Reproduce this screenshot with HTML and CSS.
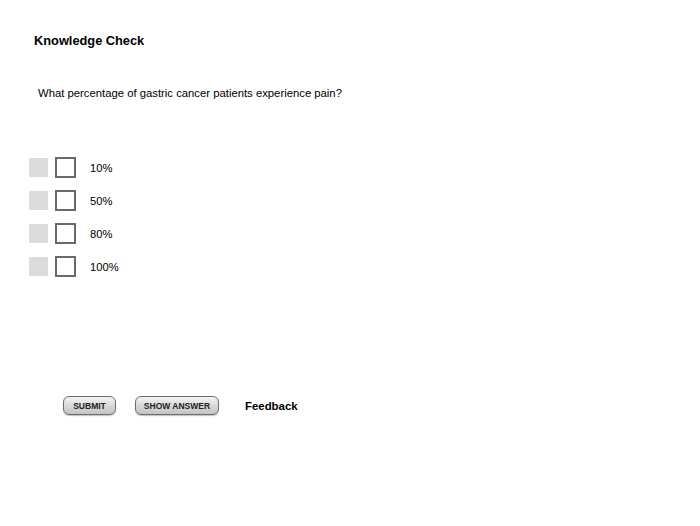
FILE: index.html
```html
<!DOCTYPE html>
<html>
<head>
<meta charset="utf-8">
<link rel="stylesheet" href="styles.css">
</head>
<body>
<div class="page">
  <h1 class="title">Knowledge Check</h1>
  <p class="question">What percentage of gastric cancer patients experience pain?</p>
  <ul class="options">
    <li class="option"><span class="marker"></span><span class="box"></span><span class="label">10%</span></li>
    <li class="option"><span class="marker"></span><span class="box"></span><span class="label">50%</span></li>
    <li class="option"><span class="marker"></span><span class="box"></span><span class="label">80%</span></li>
    <li class="option"><span class="marker"></span><span class="box"></span><span class="label">100%</span></li>
  </ul>
  <div class="actions">
    <button class="btn btn-submit">SUBMIT</button>
    <button class="btn btn-show">SHOW ANSWER</button>
    <span class="feedback">Feedback</span>
  </div>
</div>
</body>
</html>
```
FILE: styles.css
```css
html, body {
  margin: 0;
  padding: 0;
  background: #ffffff;
}
body {
  font-family: "Liberation Sans", Arial, sans-serif;
  color: #000;
  width: 700px;
  height: 526px;
  overflow: hidden;
}
.page {
  padding: 33px 0 0 34px;
}
.title {
  margin: 0;
  font-size: 12.8px;
  font-weight: bold;
  line-height: 16px;
}
.question {
  margin: 37px 0 0 4px;
  font-size: 11.3px;
  line-height: 14px;
}
.options {
  list-style: none;
  margin: 57px 0 0 -5px;
  padding: 0;
  display: flex;
  flex-direction: column;
  gap: 12px;
}
.option {
  display: flex;
  align-items: center;
  height: 21px;
}
.marker {
  width: 19px;
  height: 19px;
  background: #dcdcdc;
}
.box {
  margin-left: 7px;
  width: 17px;
  height: 17px;
  border: 2px solid #6a6a6a;
  background: #fff;
}
.label {
  margin-left: 14px;
  font-size: 11.2px;
}
.actions {
  display: flex;
  align-items: center;
  margin: 119px 0 0 29px;
}
.btn {
  font-family: "Liberation Sans", Arial, sans-serif;
  font-weight: bold;
  font-size: 8.5px;
  color: #222;
  height: 19px;
  padding: 0;
  border: 1px solid #6e6e6e;
  border-radius: 6px;
  background: linear-gradient(#f4f4f4, #d6d6d6 55%, #c4c4c4);
  box-shadow: 0 1px 1px rgba(0,0,0,0.25);
}
.btn-submit {
  width: 53px;
}
.btn-show {
  width: 84px;
  margin-left: 19px;
}
.feedback {
  margin-left: 26px;
  font-size: 11.4px;
  font-weight: bold;
}
```
